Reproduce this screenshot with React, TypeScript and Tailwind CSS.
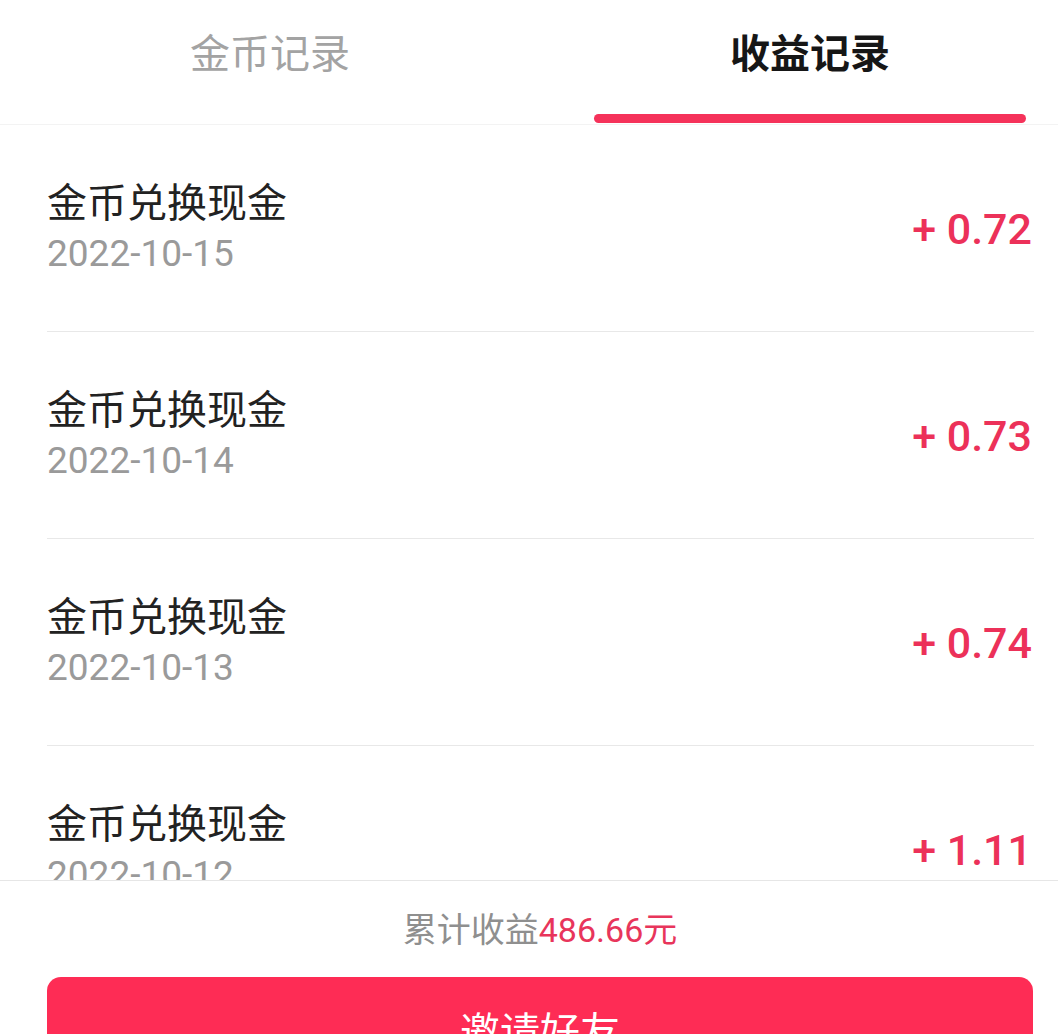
import React from "react";

const rows = [
  { date: "2022-10-15", amount: "+ 0.72" },
  { date: "2022-10-14", amount: "+ 0.73" },
  { date: "2022-10-13", amount: "+ 0.74" },
  { date: "2022-10-12", amount: "+ 1.11" },
];

export default function App() {
  return (
    <div
      className="relative h-[1034px] w-[1058px] overflow-hidden bg-white"
      style={{ fontFamily: '"Roboto", "Noto Sans CJK SC", sans-serif' }}
    >
      <div className="flex h-[125px] border-b border-[#f3f3f3] overflow-hidden">
        <div className="flex w-[540px] shrink-0 flex-col items-center">
          <div className="pt-[31px] text-[40px] leading-[48px] text-[#a3a3a3]">金币记录</div>
        </div>
        <div className="flex w-[540px] shrink-0 flex-col items-center">
          <div className="pt-[31px] text-[40px] font-bold leading-[48px] text-[#161616]">收益记录</div>
          <div className="mt-auto mb-[1px] h-[9px] w-[432px] rounded-full bg-[#f5325a]" />
        </div>
      </div>

      <div className="h-[755px] overflow-hidden pl-[47px] pr-[24px]">
        {rows.map((r) => (
          <div
            key={r.date}
            className="flex h-[207px] items-center justify-between border-b border-[#e8e8e8] pt-[2px]"
          >
            <div className="flex flex-col">
              <div className="text-[40px] leading-[50px] text-[#222222]">金币兑换现金</div>
              <div className="text-[37px] leading-[50px] text-[#9a9a9a]">{r.date}</div>
            </div>
            <div className="pr-[2px] text-[43px] font-medium leading-[50px] text-[#ec3159]">{r.amount}</div>
          </div>
        ))}
      </div>

      <div className="border-t border-[#e6e6e6] bg-white px-[47px] pr-[25px] pt-[30px]">
        <div className="text-center text-[34px] leading-[38px] text-[#8f8f8f]">
          累计收益<span className="text-[#e8355b]">486.66元</span>
        </div>
        <div className="mt-[28px] flex h-[112px] items-center justify-center rounded-[14px] bg-[#fe2c55] text-[40px] text-white">
          邀请好友
        </div>
      </div>
    </div>
  );
}
